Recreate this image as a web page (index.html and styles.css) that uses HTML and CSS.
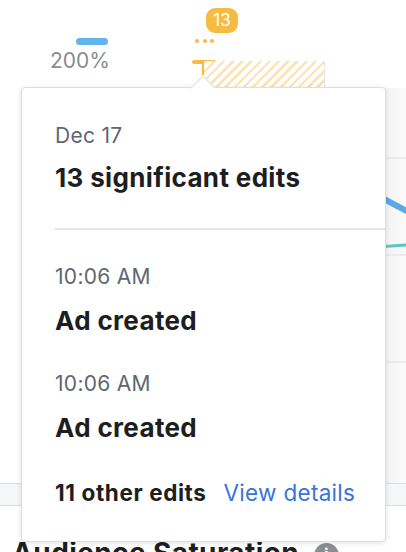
FILE: index.html
```html
<!DOCTYPE html>
<html lang="en">
<head>
  <meta charset="UTF-8" />
  <meta name="viewport" content="width=device-width, initial-scale=1.0"/>
  <title>Edits tooltip</title>
  <link rel="stylesheet" href="styles.css">
</head>
<body>

<div class="chart">
  <div class="pill"></div>
  <div class="pct">200%</div>

  <div class="badge">13</div>
  <div class="dots"><span></span><span></span><span></span></div>
  <div class="edit-bar"></div>
  <div class="edit-stem"></div>
  <div class="hatch"></div>

  <div class="side">
    <div class="side-line l1"></div>
    <div class="side-line l2"></div>
    <div class="side-line l3"></div>
    <div class="trend blue"></div>
    <div class="trend teal"></div>
  </div>

  <div class="band"></div>

  <div class="section-title">
    Audience Saturation
    <span class="info">i</span>
  </div>
</div>

<div class="tip">
  <div class="tip-arrow"></div>
  <div class="tip-date">Dec 17</div>
  <div class="tip-title">13 significant edits</div>
  <hr class="tip-rule">
  <div class="tip-item">
    <div class="tip-time">10:06 AM</div>
    <div class="tip-what">Ad created</div>
  </div>
  <div class="tip-item">
    <div class="tip-time">10:06 AM</div>
    <div class="tip-what">Ad created</div>
  </div>
  <div class="tip-foot">
    <b>11 other edits</b>
    <a href="#">View details</a>
  </div>
</div>

</body>
</html>
```

FILE: styles.css
```css
body {
  margin: 0;
  width: 406px;
  height: 552px;
  overflow: hidden;
  position: relative;
  background: #fff;
  font-family: Inter, "Liberation Sans", sans-serif;
  color: #1c1e21;
}

/* chart behind the tooltip */
.chart {
  position: absolute;
  inset: 0;
}
.pill {
  position: absolute;
  left: 76px;
  top: 38px;
  width: 32px;
  height: 7px;
  border-radius: 4px;
  background: #63b3ed;
}
.pct {
  position: absolute;
  left: 50px;
  top: 48px;
  font-size: 21px;
  line-height: 26px;
  color: #8a8d91;
}
.badge {
  position: absolute;
  left: 206px;
  top: 8px;
  width: 32px;
  height: 25px;
  border-radius: 9px;
  background: #f5bc41;
  color: #fff;
  font-size: 17px;
  line-height: 25px;
  text-align: center;
}
.dots {
  position: absolute;
  left: 195px;
  top: 39px;
  display: flex;
  gap: 3.5px;
}
.dots span {
  width: 4px;
  height: 4px;
  border-radius: 50%;
  background: #f5bc41;
}
.edit-bar {
  position: absolute;
  left: 192px;
  top: 60px;
  width: 24px;
  height: 4px;
  border-radius: 2px;
  background: #f5bc41;
}
.edit-stem {
  position: absolute;
  left: 202px;
  top: 64px;
  width: 2px;
  height: 11px;
  background: #f5bc41;
}
.hatch {
  position: absolute;
  left: 204px;
  top: 61px;
  width: 120px;
  height: 27px;
  border-right: 1px solid #e6e6e6;
  background: repeating-linear-gradient(-45deg, #fff 0 4px, #fbe5b6 4px 6.5px);
}
.side {
  position: absolute;
  left: 384px;
  top: 88px;
  width: 22px;
  height: 395px;
  background: linear-gradient(to right, #f3f3f4, #fafafa);
  overflow: hidden;
}
.side-line {
  position: absolute;
  left: 0;
  right: 0;
  height: 2px;
  background: #ebebeb;
}
.l1 { top: 69px; }
.l2 { top: 166px; }
.l3 { top: 273px; }
.trend {
  position: absolute;
  transform-origin: left center;
}
.trend.blue {
  left: 0;
  top: 108px;
  width: 34px;
  height: 6px;
  background: #5aa9e6;
  transform: rotate(28deg);
}
.trend.teal {
  left: 0;
  top: 157px;
  width: 30px;
  height: 3px;
  background: #5cc6c6;
  transform: rotate(-4deg);
}
.band {
  position: absolute;
  left: 0;
  right: 0;
  top: 483px;
  height: 21px;
  background: #f5f6f7;
  border-top: 1px solid #dadde1;
  border-bottom: 1px solid #dadde1;
}
.section-title {
  position: absolute;
  left: 12px;
  top: 538px;
  font-size: 28px;
  line-height: 30px;
  font-weight: 700;
  letter-spacing: 0.4px;
  white-space: nowrap;
}
.info {
  display: inline-block;
  width: 25px;
  height: 25px;
  margin-left: 8px;
  border-radius: 50%;
  background: #8a8d91;
  color: #fff;
  font-size: 17px;
  line-height: 25px;
  text-align: center;
  vertical-align: 2px;
}

/* tooltip card */
.tip {
  position: absolute;
  left: 21px;
  top: 87px;
  width: 330px;
  padding: 35px 0 35px 33px;
  background: #fff;
  border: 1px solid #dddfe2;
  border-radius: 4px;
  box-shadow: 0 1px 5px rgba(0, 0, 0, 0.12);
}
.tip-arrow {
  position: absolute;
  left: 172px;
  top: -9px;
  width: 17px;
  height: 17px;
  background: #fff;
  border-left: 1px solid #dddfe2;
  border-top: 1px solid #dddfe2;
  transform: rotate(45deg);
}
.tip-date,
.tip-time {
  font-size: 21px;
  line-height: 26px;
  letter-spacing: 0.3px;
  color: #606770;
}
.tip-title,
.tip-what {
  font-size: 26px;
  line-height: 30px;
  font-weight: 700;
  letter-spacing: 0.35px;
  margin-top: 14px;
}
.tip-what {
  margin-top: 16px;
}
.tip-rule {
  margin: 35px 0 34px 0;
  height: 2px;
  border: 0;
  background: #e2e4e8;
}
.tip-item + .tip-item {
  margin-top: 35px;
}
.tip-foot {
  margin-top: 37px;
  font-size: 22.5px;
  line-height: 26px;
  letter-spacing: 0.3px;
  display: flex;
  gap: 17px;
}
.tip-foot b {
  font-weight: 700;
  letter-spacing: 0.6px;
}
.tip-foot a {
  color: #3a74d8;
  text-decoration: none;
}
```
